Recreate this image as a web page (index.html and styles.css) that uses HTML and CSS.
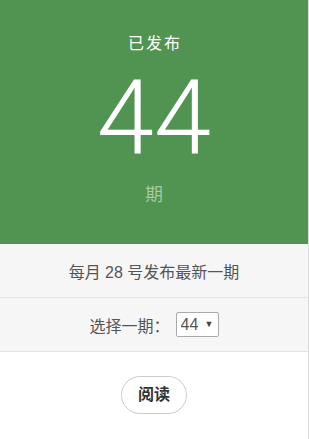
FILE: index.html
```html
<!DOCTYPE html>
<html lang="zh">
<head>
    <meta charset="UTF-8">
    <title>已发布</title>
    <link rel="stylesheet" href="styles.css">
</head>
<body>

<div class="page">
    <section class="hero">
        <p class="hero-label">已发布</p>
        <p class="hero-count">44</p>
        <p class="hero-unit">期</p>
    </section>

    <div class="info-row">每月 28 号发布最新一期</div>

    <div class="info-row pick-row">
        <label for="issue">选择一期：</label>
        <span class="select-box">
            <select id="issue">
                <option>44</option>
                <option>43</option>
                <option>42</option>
            </select>
            <span class="caret">&#9660;</span>
        </span>
    </div>

    <div class="actions">
        <a class="read-btn" href="#">阅读</a>
    </div>
</div>

</body>
</html>
```

FILE: styles.css
```css
body {
    margin: 0;
    padding: 0;
    font-family: "Liberation Sans", "Noto Sans CJK SC", sans-serif;
    color: #555;
    background-color: #fff;
}

.page {
    width: 308px;
    min-height: 439px;
    border-right: 1px solid #ddd;
}

.hero {
    background-color: #519351;
    color: #fff;
    text-align: center;
    height: 244px;
    padding-top: 33px;
    box-sizing: border-box;
}

.hero p {
    margin: 0;
}

.hero-label {
    font-size: 16px;
    letter-spacing: 2px;
    text-indent: 2px;
    line-height: 22px;
}

.hero-count {
    font-family: "Roboto", sans-serif;
    font-weight: 300;
    font-size: 103px;
    line-height: 116px;
    margin-top: 6px !important;
}

.hero-unit {
    color: #a6c9a0;
    font-size: 18px;
    line-height: 24px;
    margin-top: 6px !important;
}

.info-row {
    background-color: #f6f6f6;
    border-bottom: 1px solid #e3e3e3;
    height: 53px;
    display: flex;
    align-items: center;
    justify-content: center;
    font-size: 16px;
    color: #555;
}

.pick-row label {
    margin-right: 6px;
}

.select-box {
    position: relative;
    display: inline-block;
}

.select-box select {
    appearance: none;
    -webkit-appearance: none;
    font-family: "Liberation Sans", sans-serif;
    font-size: 16px;
    color: #555;
    background: #fff;
    border: 1px solid #aaa;
    border-radius: 2px;
    width: 43px;
    height: 25px;
    padding: 0 0 0 4px;
    outline: none;
    display: block;
}

.select-box .caret {
    position: absolute;
    right: 5px;
    top: 7px;
    font-size: 9px;
    color: #444;
    pointer-events: none;
}

.actions {
    display: flex;
    justify-content: center;
    padding-top: 24px;
}

.read-btn {
    display: inline-block;
    width: 64px;
    height: 36px;
    line-height: 36px;
    text-align: center;
    border: 1px solid #ccc;
    border-radius: 19px;
    color: #333;
    font-size: 16px;
    font-weight: bold;
    text-decoration: none;
}
```
